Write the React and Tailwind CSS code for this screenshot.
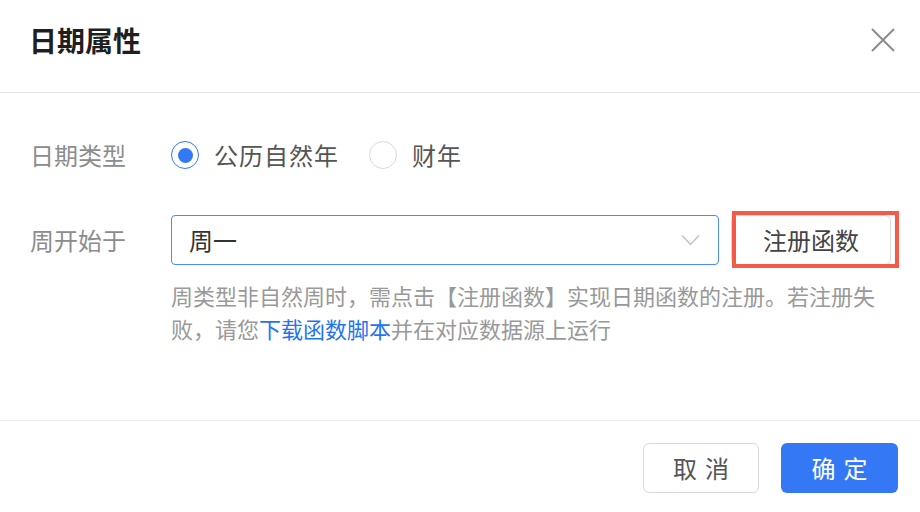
import React, { useState } from "react";

const font = { fontFamily: '"Noto Sans CJK SC", "Noto Sans", sans-serif' };

const Radio = ({ checked, label, onClick }) => (
  <button onClick={onClick} className="flex items-center gap-[15px]">
    <span
      className={
        checked
          ? "flex h-[28px] w-[28px] items-center justify-center rounded-full border-[1.5px] border-[#3478f6] bg-white"
          : "flex h-[28px] w-[28px] items-center justify-center rounded-full border-[1.5px] border-[#d9d9d9] bg-white"
      }
    >
      {checked && <span className="h-[15px] w-[15px] rounded-full bg-[#3478f6]" />}
    </span>
    <span className="text-[24px] leading-[32px] tracking-[1px] text-[#555]">{label}</span>
  </button>
);

const App = () => {
  const [dateType, setDateType] = useState("natural");

  return (
    <div className="flex h-[512px] w-[920px] flex-col bg-white" style={font}>
      {/* Header */}
      <div className="flex h-[93px] items-center justify-between border-b border-[#e8e8e8] pb-[12px] pl-[29px] pr-[24px]">
        <div className="text-[28px] font-bold leading-[36px] text-[#1f1f1f]">日期属性</div>
        <button aria-label="关闭" className="text-[#8c8c8c]">
          <svg width="26" height="26" viewBox="0 0 26 26" fill="none" stroke="currentColor" strokeWidth="2">
            <path d="M2 2 L24 24 M24 2 L2 24" />
          </svg>
        </button>
      </div>

      {/* Body */}
      <div className="flex-1 border-b border-[#ececec] pl-[30px] pr-[29px] pt-[40px]">
        <div className="flex h-[44px] items-center">
          <div className="w-[141px] text-[24px] text-[#8c8c8c]">日期类型</div>
          <div className="flex items-center gap-[30px]">
            <Radio checked={dateType === "natural"} label="公历自然年" onClick={() => setDateType("natural")} />
            <Radio checked={dateType === "fiscal"} label="财年" onClick={() => setDateType("fiscal")} />
          </div>
        </div>

        <div className="mt-[38px] flex items-center">
          <div className="w-[141px] text-[24px] text-[#8c8c8c]">周开始于</div>
          <div className="flex h-[50px] w-[548px] items-center justify-between rounded-[4px] border border-[#4a8cf7] pl-[17px] pr-[18px]">
            <span className="text-[24px] text-[#333]">周一</span>
            <svg width="19" height="12" viewBox="0 0 19 12" fill="none" stroke="#bfbfbf" strokeWidth="1.3">
              <path d="M1 1.5 L9.5 10.5 L18 1.5" />
            </svg>
          </div>
          <div className="relative ml-[12px]">
            <button className="flex h-[50px] w-[160px] items-center justify-center rounded-[6px] border border-[#d9d9d9] text-[24px] text-[#444]">
              注册函数
            </button>
            <div className="pointer-events-none absolute left-[1px] top-[-4px] h-[57px] w-[167px] border-[4px] border-[#f45a4a]" />
          </div>
        </div>

        <div className="ml-[141px] mt-[14px] w-[720px] text-[22px] leading-[33px] text-[#999]">
          <div>周类型非自然周时，需点击【注册函数】实现日期函数的注册。若注册失</div>
          <div className="flex">
            <span>败，请您</span>
            <a href="#" className="text-[#1f74f5]">下载函数脚本</a>
            <span>并在对应数据源上运行</span>
          </div>
        </div>
      </div>

      {/* Footer */}
      <div className="flex h-[91px] items-start justify-end gap-[22px] pr-[22px] pt-[22px]">
        <button className="h-[50px] w-[116px] rounded-[6px] border border-[#d9d9d9] bg-white pl-[8px] text-[24px] tracking-[8px] text-[#555]">
          取消
        </button>
        <button className="h-[50px] w-[117px] rounded-[6px] bg-[#3478f6] pl-[8px] text-[24px] tracking-[8px] text-white">
          确定
        </button>
      </div>
    </div>
  );
};

export default App;
